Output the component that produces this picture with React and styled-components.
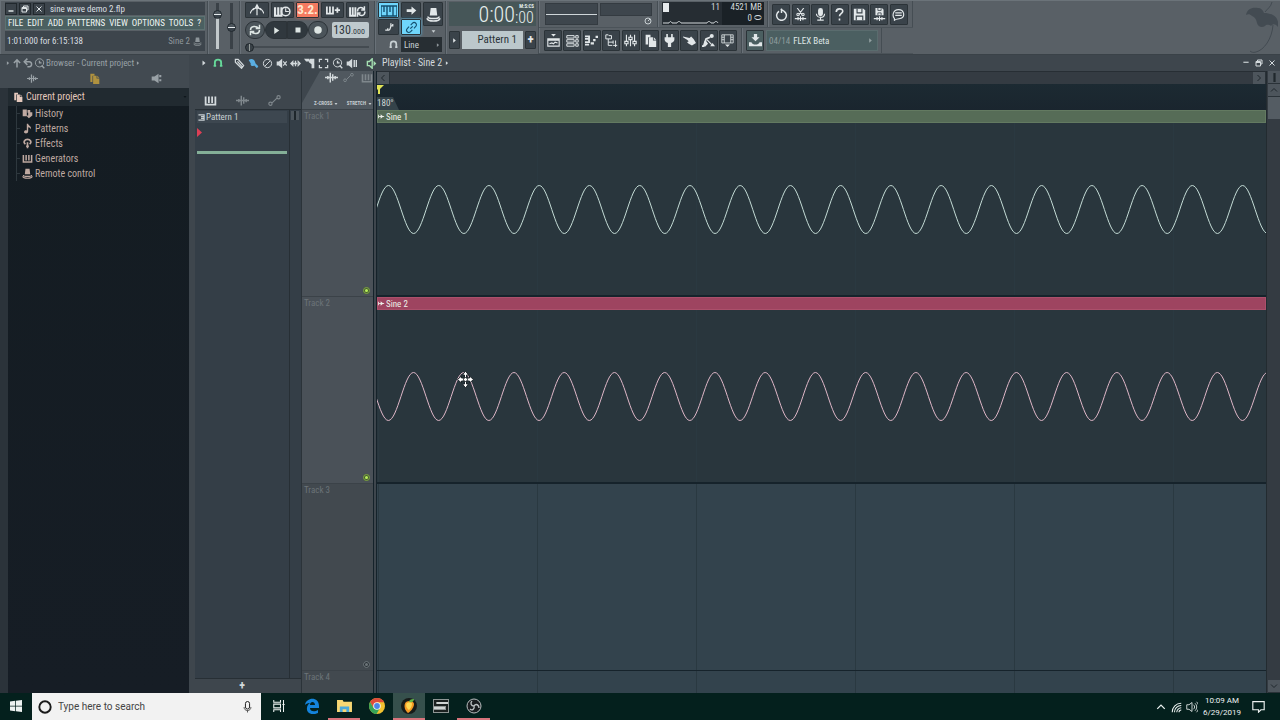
import React from "react";
import styled, { createGlobalStyle } from "styled-components";

const condensed = `"Roboto Condensed", "Liberation Sans Narrow", "DejaVu Sans Condensed", sans-serif`;

const GlobalStyle = createGlobalStyle`
  * {
    box-sizing: border-box;
  }

  body {
    margin: 0;
    overflow: hidden;
    background: #33434d;
    font-family: ${condensed};
  }

  button,
  input,
  select {
    margin: 0;
    padding: 0;
    border: 0;
    color: inherit;
    font: inherit;
    background: none;
    appearance: none;
  }

  h1,
  h2,
  p,
  ul {
    margin: 0;
    padding: 0;
    font-size: inherit;
    font-weight: inherit;
    list-style: none;
  }
`;

/* ---------- icons ---------- */

const Svg = styled.svg`
  display: block;
  flex: none;
  fill: none;
  stroke: currentColor;
  stroke-width: 1.4;
`;

const solid = { fill: "currentColor", stroke: "none" };

const shapes = {
  metronome: <path d="M0 12c2-4 4-6 5-6M16 12c-2-4-4-6-5-6M3 8c3-3 7-3 10 0M8 2v12M6 6l2-4 2 4z" />,
  keysClock: (
    <>
      <path d="M1 4v8h6V4M4 4v7" strokeWidth="2" />
      <circle cx="11" cy="8" r="4" />
      <path d="M11 5v3h3" strokeWidth="1" />
    </>
  ),
  keysPlus: <path d="M1 4v8h7V4M4.500 4v7M10 8h6M13 5v6" strokeWidth="2" />,
  keysLoop: (
    <>
      <path d="M1 4v8h5V4M3.500 4v7" strokeWidth="1.800" />
      <path d="M8 8c0-4 4-5 6-2M15 8c0 4-4 5-6 2M11.500 6.500h3V3M11 9.500H8V13" />
    </>
  ),
  loop: <path d="M2 8c0-6 8-6 11-2M14 8c0 6-8 6-11 2M14 1v5H9M2 15v-5h5" strokeWidth="2" />,
  play: <path d="M4 2l9 6-9 6z" {...solid} />,
  stop: <path d="M3 3h10v10H3z" {...solid} />,
  record: <circle cx="8" cy="8" r="6" {...solid} />,
  piano: <path d="M0 3h16v10H0zM3 3v6M6 3v10M9 3v6M12 3v10" />,
  arrow: <path d="M1 6h7V2l7 6-7 6v-4H1z" {...solid} />,
  slide: <path d="M3 13h5c2 0 2-4 3-6M2 13h4v-3M11 2v4h3V3" strokeWidth="2" />,
  link: <path d="M6.500 9.500l3-3M7 5l2-2c3-3 7 1 4 4l-2 2M9 11l-2 2c-3 3-7-1-4-4l2-2" />,
  knob: (
    <>
      <path d="M5 1h6l1 8H4z" {...solid} />
      <path d="M2 10c0 3 12 3 12 0M1 12c1 4 13 4 14 0" strokeWidth="1.600" />
    </>
  ),
  magnet: <path d="M3 14V7c0-6 10-6 10 0v7M1 12.500h4M11 12.500h4" strokeWidth="3" />,
  power: <path d="M5 4a6 6 0 1 0 6 0M8 6V1M7 1l4 3" strokeWidth="1.800" />,
  scissors: (
    <>
      <path d="M4 0l6 8M12 0L6 8M1 13h14M5 11v4M8 10v6M11 11v4" />
      <circle cx="5" cy="8" r="1.500" />
      <circle cx="11" cy="8" r="1.500" />
    </>
  ),
  mic: (
    <>
      <rect x="5" y="0" width="6" height="10" rx="3" {...solid} />
      <path d="M3 7c0 6 10 6 10 0M8 11v4M4 15h8" />
    </>
  ),
  help: <path d="M4 5c0-5 8-5 8-1 0 3-4 3-4 6M8 13v2.500" strokeWidth="2" />,
  save: (
    <>
      <path d="M1 1h12l2 2v12H1z" {...solid} />
      <path d="M5 1v5h6V1M4 15v-5h8v5" stroke="#3a444b" />
    </>
  ),
  saveWave: (
    <>
      <path d="M3 0h8l2 2v7H3z" {...solid} />
      <path d="M6 0v3h4V0M6 9V6h4v3" stroke="#3a444b" strokeWidth="1" />
      <path d="M1 13h14M5 11v4M8 10v6M11 11v4" />
    </>
  ),
  comment: <path d="M3 13c-3-3-2-11 5-11s9 9 2 11c-3 1-4 0-7 2zM4 6h8M4 9h8" />,
  playlist: (
    <>
      <path d="M1 6h14v9H1zM1 7.500h14M3 12l3-1 2 1 2-2 3 1" />
      <path d="M5 0h6L8 3z" {...solid} />
    </>
  ),
  rack: <path d="M1 2h9v3H1zM1 7h9v3H1zM1 12h9v3H1zM12 2h3v3h-3zM12 7h3v3h-3zM12 12h3v3h-3z" strokeWidth="1.200" />,
  roll: (
    <>
      <path d="M0 3h5v3H0M0 10h5V7M0 13h5" strokeWidth="2.200" />
      <path d="M7 10h4v3H7zM10 6h3v3h-3zM13 2h3v3h-3z" {...solid} />
    </>
  ),
  tree: <path d="M1 1h3l1 1h3v4H1zM4 6v8h5M4 10h6M10 8v4M13 8v4M10 14h5M13 12v4" strokeWidth="1.200" />,
  mixer: (
    <>
      <path d="M3 1v14M8 1v14M13 1v14" />
      <path d="M1 9h4v3H1zM6 4h4v3H6zM11 9h4v3h-4z" fill="#3a444b" />
    </>
  ),
  page: (
    <>
      <path d="M2 1h6v3H5v9H2z" {...solid} />
      <path d="M6 4h5v4h4v8H6zM12 4l3 3h-3z" {...solid} />
    </>
  ),
  plug: <path d="M4 0h2v4h4V0h2v4h2v3c0 2-2 3-4 4v5H6v-5C4 10 2 9 2 7V4h2z" {...solid} />,
  hand: <path d="M0 3l8 2 2-2 3 3 3 5-5 3-4-2-2-2 2-1-2-2-5-3z" {...solid} />,
  digger: (
    <>
      <circle cx="12" cy="2.500" r="2.500" {...solid} />
      <path d="M10 4L5 6 4 9l2 3-3 3M4 9l-2 6H0" strokeWidth="2.200" />
      <path d="M6 7l6 6" />
      <path d="M10 15l3-4 3 4z" {...solid} />
    </>
  ),
  film: (
    <>
      <path d="M1 1h14v10H1zM4 1v10M12 1v10M1 4h3M1 7h3M12 4h3M12 7h3" strokeWidth="1" />
      <path d="M5 13h6l-3 3z" {...solid} />
    </>
  ),
  download: <path d="M6 0h4v4h3L8 9 3 4h3zM0 10h3c1 4 9 4 10 0h3v5H0z" {...solid} />,
  up: <path d="M8 15V3M3 8l5-5 5 5" strokeWidth="2.400" />,
  undo: <path d="M4 6h6c5 0 5 8 0 8H7M7 1L2 6l5 5" strokeWidth="2.400" />,
  search: (
    <>
      <circle cx="8" cy="7" r="6" />
      <path d="M11 11l4 4M8 4v3h3" strokeWidth="2" />
    </>
  ),
  wave: <path d="M0 8h16M3.500 6v4M6.500 2v12M9.500 4v8M12.500 6v4" strokeWidth="1.800" />,
  speaker: <path d="M1 5h4l6-4v14l-6-4H1zM12 3h3v3h-3zM12 9h3v3h-3z" {...solid} />,
  history: <path d="M1 2h6v10H1zM8 3h4v3h3v5l-5 4-4-4h3V7H8z" {...solid} />,
  note: <path d="M7 1h2c0 3 5 3 4 8-1-2-2-3-4-3v6c0 4-6 4-6 1 0-2 2-3 4-2z" {...solid} />,
  effect: <path d="M5 9C1 6 4 2 8 2s7 4 3 7M8 6v9M6 12h4" strokeWidth="2.400" />,
  keys: <path d="M2 3v10h12V3M6 3v8M10 3v8" strokeWidth="2.200" />,
  automation: (
    <>
      <circle cx="3" cy="12" r="2" />
      <circle cx="13" cy="4" r="2" />
      <path d="M5 11l6-6" />
    </>
  ),
  pencil: <path d="M2 2h4l8 9-3 4-9-9zM5 5l7 8" strokeWidth="1.800" />,
  brush: <path d="M1 3c4-3 8-1 9 2l1 3 4 4-2 3-4-4c-3 2-6 0-5-3z" {...solid} />,
  ban: (
    <>
      <circle cx="8" cy="8" r="6" />
      <path d="M4 12l8-8" />
    </>
  ),
  mute: (
    <>
      <path d="M1 5h3l5-4v14l-5-4H1z" {...solid} />
      <path d="M10.500 5l5 6M15.500 5l-5 6" strokeWidth="1.600" />
    </>
  ),
  slip: <path d="M0 8l5-5v10zM16 8l-5-5v10zM4 7h8v2H4zM7 4h2v8H7z" {...solid} />,
  slice: <path d="M0 1h8v4L3 5zM9 1h6v14h-4V9L7 6z" {...solid} />,
  select: <path d="M2 6V2h4M10 2h4v4M14 10v4h-4M6 14H2v-4" strokeWidth="1.800" />,
  playback: <path d="M1 5h3l5-4v14l-5-4H1zM11 3h2v10h-2zM14 3h2v10h-2z" {...solid} />,
  scrub: (
    <>
      <path d="M2 5h3l4-4v14l-4-4H2z" strokeWidth="2" />
      <path d="M11 4l4 4-4 4z" {...solid} />
    </>
  ),
  chevron: <path d="M5 3l6 5-6 5z" {...solid} />,
  down: <path d="M2 4h12l-6 8z" {...solid} />,
  left: <path d="M11 2L5 8l6 6" strokeWidth="2" />,
  right: <path d="M5 2l6 6-6 6" strokeWidth="2" />,
  top: <path d="M2 11l6-6 6 6" strokeWidth="2" />,
  bottom: <path d="M2 5l6 6 6-6" strokeWidth="2" />,
  split: <path d="M6 0h4v16H6z" {...solid} />,
  minus: <path d="M3 12h10" strokeWidth="3" />,
  minusHigh: <path d="M1 6h14" strokeWidth="3" />,
  windows: <path d="M5 5V2h9v8h-3M2 5h9v9H2zM2 7h9" strokeWidth="2" />,
  close: <path d="M3 3l10 10M13 3L3 13" strokeWidth="2" />,
  clip: (
    <>
      <path d="M1 4v8M2 8h12" strokeWidth="2" />
      <path d="M6 3v10l6-5z" {...solid} />
    </>
  ),
  pattern: <path d="M1 2h13v12H1M7 6h7M7 10h7" strokeWidth="2.600" />,
  dial: (
    <>
      <circle cx="8" cy="8" r="6" strokeWidth="2" />
      <path d="M8 8l4-4" strokeWidth="2" />
    </>
  ),
};

const Icon = ({ name, size = 12 }) => (
  <Svg width={size} height={size} viewBox="0 0 16 16" aria-hidden="true">
    {shapes[name]}
  </Svg>
);

/* ---------- toolbar ---------- */

const Window = styled.div`
  display: flex;
  flex-direction: column;
  height: 100vh;
  overflow: hidden;
  color: #c8d0d3;
  font-size: 9px;
  line-height: 12px;
`;

const Toolbar = styled.header`
  display: flex;
  flex: none;
  height: 54px;
  background: #596066;
  border-top: 1px solid #6b7379;
`;

const Panel = styled.section`
  display: flex;
  flex: none;
  flex-direction: ${({ $column }) => ($column ? "column" : "row")};
  gap: ${({ $gap = 0 }) => $gap}px;
  width: ${({ $width }) => ($width ? `${$width}px` : "auto")};
  padding: ${({ $pad = "2px 5px" }) => $pad};
  border-right: 1px solid #454d53;
  border-left: 1px solid #697178;
`;

const Line = styled.div`
  display: flex;
  align-items: ${({ $align = "center" }) => $align};
  justify-content: ${({ $justify = "flex-start" }) => $justify};
  gap: ${({ $gap = 0 }) => $gap}px;
  width: ${({ $width }) => ($width ? `${$width}px` : "auto")};
`;

const Stack = styled.div`
  display: flex;
  flex-direction: column;
  align-items: ${({ $align = "stretch" }) => $align};
  gap: ${({ $gap = 0 }) => $gap}px;
`;

const ToolRow = styled.div`
  display: flex;
  height: 27px;
  border-bottom: 1px solid #4b5359;
`;

const InfoTitle = styled.div`
  display: flex;
  align-items: center;
  height: 13px;
  gap: 2px;
  background: #3d454c;
`;

const InfoName = styled.h1`
  padding-left: 3px;
  color: #d9dfe1;
`;

const TinyButton = styled.button`
  display: grid;
  place-items: center;
  width: 12px;
  height: 12px;
  border: 1px solid #21282d;
  background: #3b434a;
  color: #dfe4e6;
`;

const Menu = styled.nav`
  display: flex;
  align-items: center;
  justify-content: space-between;
  height: 14px;
  padding: 0 3px 0 2px;
  background: #4b6061;
  border: 1px solid #5d7272;
`;

const MenuItem = styled.button`
  font-size: 9px;
  color: #f0f6f4;
`;

const Hint = styled.div`
  display: flex;
  align-items: center;
  justify-content: space-between;
  height: 20px;
  padding: 0 3px 0 2px;
  background: #3d454c;
  color: #d9dfe1;
`;

const HintTarget = styled.span`
  display: flex;
  align-items: center;
  gap: 3px;
  color: #8d959a;
`;

const Fader = styled.input`
  width: 10px;
  height: 46px;
  writing-mode: vertical-lr;
  direction: rtl;
  background: linear-gradient(${({ $track }) => $track}) center / 3px 100% no-repeat;

  &::-webkit-slider-thumb {
    width: 9px;
    height: 9px;
    border: 1px solid #222a30;
    border-radius: 50%;
    background: linear-gradient(#4e575e 40%, #e5eaec 40%, #e5eaec 60%, #39424a 60%);
    appearance: none;
  }
`;

const PositionBar = styled.input`
  width: 100%;
  height: 10px;
  background: linear-gradient(#444b51, #444b51) center / 100% 2px no-repeat;

  &::-webkit-slider-thumb {
    width: 9px;
    height: 9px;
    border: 1px solid #1d2429;
    border-radius: 50%;
    background: linear-gradient(90deg, #3a4248 40%, #969d9b 40%, #969d9b 60%, #3a4248 60%);
    appearance: none;
  }
`;

const tones = {
  dark: "background: #3a434a; color: #e2e7e9;",
  blue: "background: #6fd6fb; color: #14506f; box-shadow: 0 0 3px #59bfee;",
  red: "background: #f57a60; color: #ffe9d0; box-shadow: 0 0 3px #d86752;",
  green: "background: #4b5f61; color: #e2e7e9;",
};

const ToolButton = styled.button`
  display: grid;
  flex: none;
  place-items: center;
  width: ${({ $w = 18 }) => $w}px;
  height: ${({ $h = 21 }) => $h}px;
  border: 1px solid #2b3338;
  border-radius: 1px;
  font-size: 13px;
  font-weight: 700;
  ${({ $tone = "dark" }) => tones[$tone]}
`;

const RoundButton = styled.button`
  display: grid;
  place-items: center;
  width: ${({ $w = 20 }) => $w}px;
  height: 18px;
  border: 1px solid #2c3338;
  border-radius: ${({ $radius = "9px" }) => $radius};
  background: ${({ $fill = "#30383e" }) => $fill};
  color: #dde5e3;
`;

const Tempo = styled.output`
  display: flex;
  align-items: baseline;
  justify-content: center;
  width: 37px;
  height: 16px;
  margin-left: 4px;
  padding-right: 3px;
  border-radius: 2px;
  background: #bfc9cd;
  color: #2f383e;
  font-size: 12px;
  line-height: 16px;

  small {
    font-size: 8px;
  }
`;

const SnapBox = styled.label`
  display: flex;
  align-items: center;
  width: 41px;
  height: 15px;
  padding: 0 1px 0 3px;
  background: #272e33;
  color: #8d959a;
`;

const SnapSelect = styled.select`
  flex: 1;
  min-width: 0;
  color: #c8d0d3;
`;

const Clock = styled.output`
  display: flex;
  justify-content: flex-end;
  height: 24px;
  padding: 0 2px;
  background: #465658;
  color: #e7efee;
  font-size: 22px;
  font-weight: 300;
  line-height: 26px;
`;

const ClockCents = styled.span`
  display: flex;
  flex-direction: column;
  width: 19px;
  padding-top: 1px;
  font-size: 16px;
  line-height: 17px;

  small {
    align-self: flex-end;
    font-size: 5px;
    font-weight: 700;
    line-height: 6px;
  }
`;

const PatternButton = styled.button`
  width: 61px;
  height: 18px;
  padding-right: 6px;
  background: #bcc8cc;
  color: #2b3439;
  font-size: 11px;
  text-align: right;
`;

const Scope = styled.div`
  display: flex;
  align-items: center;
  width: ${({ $w }) => $w}px;
  height: ${({ $h }) => $h}px;
  background: #3e464d;
  border: 1px solid #343b41;

  &::before {
    content: "";
    flex: 1;
    height: 1px;
    background: ${({ $line }) => ($line ? "#cfd6d9" : "none")};
  }
`;

const Meter = styled.div`
  display: grid;
  grid-template-columns: 60px 1fr;
  width: 102px;
  height: 23px;
  background: #1a2126;
  color: #d4dadd;
  line-height: 11px;
`;

const MeterLoad = styled.div`
  display: flex;
  flex-wrap: wrap;
  justify-content: space-between;
  padding: 0 2px 0 1px;
  background: #262d33;

  &::before {
    content: "";
    width: 6px;
    height: 9px;
    margin-top: 1px;
    background: #e6eaec;
  }
`;

const MeterText = styled.div`
  padding-right: 2px;
  text-align: right;
`;

const News = styled.button`
  display: flex;
  align-items: center;
  width: 112px;
  height: 21px;
  padding: 0 3px 0 2px;
  gap: 3px;
  background: #4b5f61;
  border: 1px solid #5a6c6e;
  color: #dfe6e6;

  time {
    color: #8d9c9d;
  }

  svg {
    margin-left: auto;
    color: #93a1a2;
  }
`;

const Brand = styled.div`
  margin-left: auto;
  color: #434b52;
`;

const TransportPanel = () => (
  <Panel $column $gap={3} $width={135} $pad="1px 5px 0 4px">
    <Line $justify="space-between">
      <ToolButton $w={24} $h={16} aria-label="Metronome"><Icon name="metronome" size={14} /></ToolButton>
      <ToolButton $w={23} $h={16} aria-label="Wait for input"><Icon name="keysClock" size={17} /></ToolButton>
      <ToolButton $w={23} $h={16} $tone="red">3.2.</ToolButton>
      <ToolButton $w={23} $h={16} aria-label="Blend recording"><Icon name="keysPlus" size={14} /></ToolButton>
      <ToolButton $w={23} $h={16} aria-label="Loop recording"><Icon name="keysLoop" size={17} /></ToolButton>
    </Line>
    <Line>
      <RoundButton $fill="#4b545a" aria-label="Loop"><Icon name="loop" /></RoundButton>
      <RoundButton $w={22} $radius="9px 0 0 9px" aria-label="Play"><Icon name="play" size={9} /></RoundButton>
      <RoundButton $w={21} $radius="0 9px 9px 0" aria-label="Stop"><Icon name="stop" size={8} /></RoundButton>
      <RoundButton $fill="#4b545a" aria-label="Record"><Icon name="record" size={10} /></RoundButton>
      <Tempo>130<small>.000</small></Tempo>
    </Line>
    <PositionBar type="range" defaultValue={0} aria-label="Song position" />
  </Panel>
);

const ModePanel = () => (
  <Panel $column $gap={2} $width={71} $pad="1px 3px 0 2px">
    <Line $gap={2} $align="flex-start">
      <Stack $gap={1}>
        <Line $gap={2}>
          <ToolButton $w={21} $h={16} $tone="blue" aria-label="Typing keyboard"><Icon name="piano" size={16} /></ToolButton>
          <ToolButton $w={20} $h={16} aria-label="Step edit"><Icon name="arrow" size={11} /></ToolButton>
        </Line>
        <Line $gap={2}>
          <ToolButton $w={21} $h={16} aria-label="Slide"><Icon name="slide" size={10} /></ToolButton>
          <ToolButton $w={20} $h={16} $tone="blue" aria-label="Multilink"><Icon name="link" size={13} /></ToolButton>
        </Line>
      </Stack>
      <Stack $gap={3} $align="center">
        <ToolButton $w={20} $h={24} aria-label="Controller"><Icon name="knob" size={15} /></ToolButton>
        <Icon name="down" size={5} />
      </Stack>
    </Line>
    <Line $justify="flex-end" $gap={3}>
      <Icon name="magnet" size={9} />
      <SnapBox>
        <SnapSelect aria-label="Snap" defaultValue="Line">
          <option>Line</option>
        </SnapSelect>
        <Icon name="chevron" size={6} />
      </SnapBox>
    </Line>
  </Panel>
);

const topTools = [
  ["power", "Undo"],
  ["scissors", "Cut"],
  ["mic", "Record audio"],
  ["help", "Help"],
  ["save", "Save"],
  ["saveWave", "Export"],
  ["comment", "Comments"],
];

const windowTools = [
  ["playlist", "Playlist"],
  ["rack", "Channel rack"],
  ["roll", "Piano roll"],
  ["tree", "Browser"],
  ["mixer", "Mixer"],
  ["page", "Projects"],
  ["plug", "Plugins"],
  ["hand", "Touch"],
  ["digger", "Tools"],
  ["film", "Arrangement"],
];

const TopBar = () => (
  <Toolbar>
    <Panel $column $gap={1} $width={208} $pad="1px 2px 0 4px">
      <InfoTitle>
        <TinyButton aria-label="Minimize"><Icon name="minus" size={8} /></TinyButton>
        <TinyButton aria-label="Restore"><Icon name="windows" size={8} /></TinyButton>
        <TinyButton aria-label="Close"><Icon name="close" size={8} /></TinyButton>
        <InfoName>sine wave demo 2.flp</InfoName>
      </InfoTitle>
      <Menu>
        {["FILE", "EDIT", "ADD", "PATTERNS", "VIEW", "OPTIONS", "TOOLS", "?"].map((item) => (
          <MenuItem key={item}>{item}</MenuItem>
        ))}
      </Menu>
      <Hint>
        <span>1:01:000 for 6:15:138</span>
        <HintTarget>Sine 2 <Icon name="knob" size={9} /></HintTarget>
      </Hint>
    </Panel>
    <Panel $gap={4} $width={32} $pad="2px 3px">
      <Fader type="range" defaultValue={81} $track="#3a4147 20%, #c3c9cb 20%" aria-label="Main volume" />
      <Fader type="range" defaultValue={47} $track="#3a4147, #3a4147" aria-label="Main pitch" />
    </Panel>
    <TransportPanel />
    <ModePanel />
    <Panel $column $gap={5} $width={93} $pad="1px 2px">
      <Clock>
        0:00
        <ClockCents>
          <small>M:S:CS</small>
          :00
        </ClockCents>
      </Clock>
      <Line $gap={2}>
        <ToolButton $w={11} $h={18} aria-label="Previous pattern"><Icon name="chevron" size={7} /></ToolButton>
        <PatternButton>Pattern 1</PatternButton>
        <ToolButton $w={11} $h={18} aria-label="Add pattern">+</ToolButton>
      </Line>
    </Panel>
    <Stack>
      <ToolRow>
        <Panel $gap={2} $width={119}>
          <Scope $w={58} $h={22} $line />
          <Stack $gap={1} $align="flex-end">
            <Scope $w={52} $h={15} />
            <Icon name="dial" size={8} />
          </Stack>
        </Panel>
        <Panel $width={110} $pad="1px 3px">
          <Meter>
            <MeterLoad>
              11
              <Svg width="56" height="10" viewBox="0 0 56 10" aria-hidden="true">
                <path d="M0 9h6c1-2 2-2 3 0h5c1-2 3-2 4 0h26c1-2 3-2 4 0h3c1-2 3-2 4 0" strokeWidth="1" />
              </Svg>
            </MeterLoad>
            <MeterText>4521 MB<br />0 ⬭</MeterText>
          </Meter>
        </Panel>
        <Panel $pad="1px 4px 1px 3px">
          <Line $width={136} $justify="space-between">
            {topTools.map(([name, label]) => (
              <ToolButton key={name} aria-label={label}><Icon name={name} size={13} /></ToolButton>
            ))}
          </Line>
        </Panel>
      </ToolRow>
      <ToolRow>
        <Panel $pad="2px 4px">
          <Line $width={193} $justify="space-between">
            {windowTools.map(([name, label]) => (
              <ToolButton key={name} aria-label={label}><Icon name={name} size={13} /></ToolButton>
            ))}
          </Line>
        </Panel>
        <Panel $gap={2} $pad="2px 3px">
          <ToolButton $tone="green" aria-label="Download"><Icon name="download" size={13} /></ToolButton>
          <News><time>04/14</time>FLEX Beta<Icon name="chevron" size={7} /></News>
        </Panel>
      </ToolRow>
    </Stack>
    <Brand>
      <Svg width="34" height="53" viewBox="0 0 34 53" aria-hidden="true">
        <path d="M0 14C1 8 6 6 12 7c3 0 5 2 6 5 7 0 13 3 14 9v5c-2-3-5-4-7-1-3-2-5-1-6 0-3 2-7 1-8-3-1-4-2-6-5-7-2-2-4-2-6-1z" {...solid} />
        <path d="M19 11c2-3 6-5 7-10M27 24c-1 14-9 25-17 27-3 1-5 0-6-1" strokeWidth="1" />
      </Svg>
    </Brand>
  </Toolbar>
);

/* ---------- browser ---------- */

const Main = styled.main`
  display: flex;
  flex: 1;
  min-height: 0;
  border-top: 1px solid #3a4248;
`;

const BrowserPane = styled.aside`
  display: flex;
  flex: none;
  flex-direction: column;
  width: 195px;
  background: #2b333a;
  border-right: 6px solid #3e464d;
`;

const BrowserHead = styled.div`
  height: 33px;
  padding: 2px 5px;
  background: #424a51;
  color: #99a1a6;
`;

const BrowserTabs = styled.div`
  display: grid;
  grid-template-columns: repeat(3, 62px);
  place-items: center;
  height: 18px;
  margin-left: -4px;
`;

const Tab = styled.button`
  color: ${({ $active }) => $active || "#99a1a6"};
`;

const Tree = styled.div`
  flex: 1;
  margin-left: 8px;
  background: linear-gradient(#141c22, #161d25);
  color: #bfa9a1;
  font-size: 10px;
`;

const TreeRoot = styled.h2`
  display: flex;
  align-items: center;
  height: 18px;
  padding: 0 2px 0 5px;
  gap: 3px;
  background: #212a30;
  color: #e5c9bd;

  svg:last-child {
    margin-left: auto;
    color: #0f161b;
  }
`;

const TreeList = styled.ul`
  margin-left: 8px;
`;

const TreeItem = styled.li`
  display: flex;
  align-items: center;
  height: 15px;
  gap: 2px;
  border-left: 1px solid #2e383e;

  &::before {
    content: "";
    width: 3px;
    height: 1px;
    background: #2e383e;
  }
`;

const treeItems = [
  ["history", "History"],
  ["note", "Patterns"],
  ["effect", "Effects"],
  ["keys", "Generators"],
  ["knob", "Remote control"],
];

const Browser = () => (
  <BrowserPane>
    <BrowserHead>
      <Line $gap={1}>
        <Icon name="chevron" size={6} />
        <Icon name="up" size={10} />
        <Icon name="undo" size={10} />
        <Icon name="search" size={11} />
        Browser - Current project
        <Icon name="chevron" size={6} />
      </Line>
      <BrowserTabs>
        <Tab aria-label="Sounds"><Icon name="wave" size={11} /></Tab>
        <Tab $active="#b0923f" aria-label="Project"><Icon name="page" size={11} /></Tab>
        <Tab aria-label="Plugins"><Icon name="speaker" size={11} /></Tab>
      </BrowserTabs>
    </BrowserHead>
    <Tree>
      <TreeRoot><Icon name="page" size={10} />Current project<Icon name="down" size={4} /></TreeRoot>
      <TreeList>
        {treeItems.map(([icon, label]) => (
          <TreeItem key={label}><Icon name={icon} size={11} />{label}</TreeItem>
        ))}
      </TreeList>
    </Tree>
  </BrowserPane>
);

/* ---------- playlist ---------- */

const PlaylistPane = styled.section`
  display: flex;
  flex: 1;
  flex-direction: column;
  min-width: 0;
  background: #3e464d;
`;

const PlaylistTitle = styled.div`
  display: flex;
  flex: none;
  align-items: center;
  height: 16px;
  padding: 0 3px 0 5px;
  gap: 2px;
  color: #d3d9dc;
`;

const PlaylistTools = styled.div`
  display: flex;
  padding: 0 3px 0 7px;
  gap: 3px;
`;

const TitleText = styled.h2`
  display: flex;
  flex: 1;
  align-items: center;
  gap: 2px;
  font-size: 10px;
`;

const Tool = styled.button`
  display: grid;
  place-items: center;
  width: ${({ $w = 11 }) => $w}px;
  color: ${({ $color = "#d3d9dc" }) => $color};
`;

const PlaylistBody = styled.div`
  display: flex;
  flex: 1;
  min-height: 0;
`;

const Picker = styled.div`
  display: flex;
  flex: none;
  flex-direction: column;
  width: 107px;
  border-right: 1px solid #2b3339;
`;

const PickerTabs = styled.div`
  display: flex;
  flex: none;
  align-items: flex-end;
  height: 38px;
  padding: 0 9px 2px;
  gap: 21px;
`;

const PickerList = styled.div`
  display: flex;
  flex: 1;
  background: #343e47;
  border-top: 1px solid #272f35;
  border-bottom: 1px solid #272f35;
`;

const PatternCard = styled.div`
  flex: 1;
  padding: 1px 2px;
  border-right: 1px solid #272f35;
`;

const PatternName = styled.p`
  display: flex;
  align-items: center;
  height: 12px;
  padding-left: 1px;
  gap: 1px;
  background: #3d4750;
`;

const PatternBody = styled.div`
  height: 31px;
  padding-top: 5px;
  border-bottom: 3px solid #84af97;
  color: #dd3f55;
`;

const PickerScroll = styled.div`
  width: 11px;
  padding: 1px;

  &::before {
    content: "";
    display: block;
    width: 8px;
    height: 9px;
    background: linear-gradient(90deg, #4c555c 3px, #1e262b 3px, #1e262b 5px, #4c555c 5px);
  }
`;

const AddPattern = styled.button`
  height: 14px;
  padding-right: 12px;
  color: #d3d9dc;
  font-size: 12px;
  font-weight: 700;
`;

const TrackColumn = styled.div`
  flex: none;
  width: 71px;
  overflow: hidden;
`;

const TrackTools = styled.div`
  display: flex;
  flex-direction: column;
  justify-content: space-between;
  height: 38px;
  padding: 0 1px 2px 12px;
  background: #50585f;
  clip-path: polygon(0 100%, 0 84%, 18px 0, 100% 0, 100% 100%);
  color: #c5ccd0;
  font-size: 5px;
  font-weight: 700;
  line-height: 7px;
`;

const TrackOption = styled.button`
  display: flex;
  align-items: center;
  gap: 2px;
`;

const TrackHead = styled.div`
  display: flex;
  flex-direction: column;
  justify-content: space-between;
  height: 187px;
  padding: 0 3px 1px 2px;
  background: ${({ $muted }) => ($muted ? "#42494f" : "#4a5158")};
  border-top: 1px solid #3b4248;
  color: #6c7479;
`;

const TrackSwitch = styled.input`
  align-self: flex-end;
  width: 7px;
  height: 7px;
  margin-bottom: 1px;
  border: 2px solid #2a3237;
  border-radius: 50%;
  outline: 1px solid #737b80;
  outline-offset: -1px;
  background: #6d757a;

  &:checked {
    border-color: #47612f;
    background: #b9f05a;
    outline-color: #7fa04c;
  }
`;

const Arrangement = styled.div`
  display: flex;
  flex: 1;
  flex-direction: column;
  min-width: 0;
  border-left: 4px double #15222a;
  overflow: hidden;
`;

const HScroll = styled.div`
  display: flex;
  flex: none;
  justify-content: space-between;
  height: 13px;
  background: #343b42;
  border-top: 1px solid #272e34;
`;

const ScrollButton = styled.button`
  display: grid;
  flex: none;
  place-items: center;
  width: 13px;
  height: 13px;
  background: #4d555c;
  color: #20282d;
  border-right: 1px solid #2a3238;
  border-bottom: 1px solid #2a3238;
`;

const Ruler = styled.div`
  flex: none;
  height: 26px;
  padding-top: 1px;
  background: linear-gradient(#1c2a32, #1a252e);
  color: #d0d8d6;
`;

const Marker = styled.svg`
  display: block;
  width: 8px;
  height: 9px;
  margin-bottom: 3px;
  fill: #e0e356;
`;

const MarkerLabel = styled.span`
  display: block;
  width: 22px;
  height: 13px;
  background: #35434a;
  clip-path: polygon(0 0, 16px 0, 100% 100%, 0 100%);
`;

const Lane = styled.div`
  display: flex;
  flex: none;
  flex-direction: column;
  height: 187px;
  background:
    repeating-linear-gradient(90deg, #2a3941 0 1px, transparent 1px 159px) 1px 0,
    ${({ $filled }) => ($filled ? "#29363d" : "#33434d")};
  border-bottom: ${({ $filled }) => ($filled ? 2 : 1)}px solid #16232b;
`;

const ClipHead = styled.div`
  display: flex;
  flex: none;
  align-items: center;
  height: 13px;
  gap: 1px;
  background: ${({ $color }) => $color};
  border: 1px solid ${({ $edge }) => $edge};
  color: #edf0ea;
`;

const WaveArea = styled.svg`
  display: block;
  flex: 1;
  width: 100%;
  min-height: 0;
  fill: none;
  stroke-width: 1;
`;

const VScroll = styled.div`
  display: flex;
  flex: none;
  flex-direction: column;
  justify-content: space-between;
  width: 14px;
  padding-left: 1px;
  background: #343b42;
  border-left: 1px solid #232b30;
`;

const VThumb = styled.div`
  height: 22px;
  background: #545c63;
`;

const MoveCursor = styled.svg`
  position: absolute;
  top: 371px;
  left: 457px;
  fill: #fff;
  stroke: #1c2429;
  stroke-width: 1;
`;

const period = 50.24;

// one cubic per half wave keeps the curve close to a true sine
const sinePath = (peakX, centre, height) => {
  const half = period / 2;
  const ease = half * 0.3642;
  let x = peakX - period;
  let y = centre - height;
  let d = `M${x} ${y}`;
  for (let i = 0; i < 110; i += 1) {
    const nextY = i % 2 ? centre - height : centre + height;
    d += `C${x + ease} ${y} ${x + half - ease} ${nextY} ${x + half} ${nextY}`;
    x += half;
    y = nextY;
  }
  return d;
};

const tracks = [
  { name: "Track 1", clip: "Sine 1", color: "#566c57", edge: "#637a61", wave: "#c4dcd6", peak: 11.5, on: true },
  { name: "Track 2", clip: "Sine 2", color: "#9e4460", edge: "#ab506b", wave: "#dfb7c8", peak: 36.5, on: true },
  { name: "Track 3", on: false },
  { name: "Track 4", on: false },
];

const playlistTools = [
  ["pencil"],
  ["brush", "#5aaee2"],
  ["ban"],
  ["mute"],
  ["slip"],
  ["slice"],
  ["select"],
  ["search"],
  ["playback"],
];

const Playlist = () => (
  <PlaylistPane>
    <PlaylistTitle>
      <Icon name="chevron" size={8} />
      <Tool $w={15} $color="#66d99a" aria-label="Snap"><Icon name="magnet" size={10} /></Tool>
      <PlaylistTools>
        {playlistTools.map(([name, color]) => (
          <Tool key={name} $color={color} aria-label={name}><Icon name={name} size={11} /></Tool>
        ))}
      </PlaylistTools>
      <Tool $w={18} $color="#a4dfb1" aria-label="Scrub"><Icon name="scrub" size={11} /></Tool>
      <TitleText>Playlist - Sine 2 <Icon name="chevron" size={6} /></TitleText>
      <Tool aria-label="Minimize playlist"><Icon name="minusHigh" size={6} /></Tool>
      <Tool aria-label="Restore playlist"><Icon name="windows" size={8} /></Tool>
      <Tool aria-label="Close playlist"><Icon name="close" size={8} /></Tool>
    </PlaylistTitle>
    <PlaylistBody>
      <Picker>
        <PickerTabs>
          <Tool aria-label="Patterns"><Icon name="keys" size={13} /></Tool>
          <Tool $color="#7f878c" aria-label="Audio clips"><Icon name="wave" size={13} /></Tool>
          <Tool $color="#7f878c" aria-label="Automation clips"><Icon name="automation" size={13} /></Tool>
        </PickerTabs>
        <PickerList>
          <PatternCard>
            <PatternName><Icon name="pattern" size={7} />Pattern 1</PatternName>
            <PatternBody>
              <Svg width="5" height="9" viewBox="0 0 5 9" aria-hidden="true"><path d="M0 0l5 4.500L0 9z" {...solid} /></Svg>
            </PatternBody>
          </PatternCard>
          <PickerScroll />
        </PickerList>
        <AddPattern aria-label="Add pattern clip">+</AddPattern>
      </Picker>
      <TrackColumn>
        <TrackTools>
          <Line $gap={7} $justify="flex-end">
            <Tool aria-label="Audio"><Icon name="wave" size={13} /></Tool>
            <Tool $color="#7f878c" aria-label="Automation"><Icon name="automation" size={11} /></Tool>
            <Tool $color="#7f878c" aria-label="Notes"><Icon name="keys" size={12} /></Tool>
          </Line>
          <Line $justify="space-between">
            <TrackOption>Z-CROSS<Icon name="down" size={4} /></TrackOption>
            <TrackOption>STRETCH<Icon name="down" size={4} /></TrackOption>
          </Line>
        </TrackTools>
        {tracks.map((track) => (
          <TrackHead key={track.name} $muted={!track.on}>
            {track.name}
            <TrackSwitch type="checkbox" defaultChecked={track.on} aria-label={`${track.name} on`} />
          </TrackHead>
        ))}
      </TrackColumn>
      <Arrangement>
        <HScroll>
          <ScrollButton aria-label="Scroll left"><Icon name="left" size={8} /></ScrollButton>
          <ScrollButton aria-label="Scroll right"><Icon name="right" size={8} /></ScrollButton>
        </HScroll>
        <Ruler>
          <Marker viewBox="0 0 8 9"><path d="M0 0h7L3 4v5H1V5L0 4z" /></Marker>
          <MarkerLabel>180°</MarkerLabel>
        </Ruler>
        {tracks.map((track) => (
          <Lane key={track.name} $filled={Boolean(track.clip)}>
            {track.clip && (
              <>
                <ClipHead $color={track.color} $edge={track.edge}><Icon name="clip" size={7} />{track.clip}</ClipHead>
                <WaveArea stroke={track.wave}><path d={sinePath(track.peak, 86.5, 24)} /></WaveArea>
              </>
            )}
          </Lane>
        ))}
      </Arrangement>
      <VScroll>
        <div>
          <ScrollButton aria-label="Split view"><Icon name="split" size={9} /></ScrollButton>
          <ScrollButton aria-label="Scroll up"><Icon name="top" size={8} /></ScrollButton>
          <VThumb />
        </div>
        <ScrollButton aria-label="Scroll down"><Icon name="bottom" size={8} /></ScrollButton>
      </VScroll>
    </PlaylistBody>
  </PlaylistPane>
);

/* ---------- taskbar ---------- */

const Taskbar = styled.footer`
  display: flex;
  flex: none;
  height: 27px;
  background: #04201d;
  color: #edf2f1;
  font-family: Roboto, "Open Sans", sans-serif;
`;

const TaskButton = styled.button`
  display: grid;
  place-items: center;
  width: ${({ $w = 32 }) => $w}px;
  padding-top: 1px;
  background: ${({ $active }) => ($active ? "#36504c" : "none")};
  border-bottom: 2px solid ${({ $open }) => ($open ? "#d8747c" : "transparent")};
`;

const SearchBox = styled.label`
  display: flex;
  align-items: center;
  width: 229px;
  padding: 0 8px 0 6px;
  gap: 6px;
  background: #f2f2f2;
  color: #1b1b1b;
`;

const SearchInput = styled.input`
  flex: 1;
  min-width: 0;
  font-size: 10px;

  &::placeholder {
    color: #444;
    opacity: 1;
  }
`;

const Tray = styled.div`
  display: flex;
  align-items: center;
  margin-left: auto;
  padding-right: 9px;
  gap: 4px;
`;

const DateTime = styled.time`
  width: 40px;
  font-size: 8px;
  text-align: center;
`;

const NoticeButton = styled.button`
  display: grid;
  place-items: center;
  width: 25px;
  height: 27px;
`;

const TaskbarView = () => (
  <Taskbar>
    <TaskButton aria-label="Start">
      <Svg width="12" height="12" viewBox="0 0 16 16">
        <path d="M0 2l7-1v6.500H0zM8 1l8-1v7.500H8zM0 8.500h7V15l-7-1zM8 8.500h8V16l-8-1z" {...solid} />
      </Svg>
    </TaskButton>
    <SearchBox>
      <Svg width="14" height="14" viewBox="0 0 16 16"><circle cx="8" cy="8" r="6.500" strokeWidth="2.200" /></Svg>
      <SearchInput type="text" placeholder="Type here to search" aria-label="Type here to search" />
      <Svg width="11" height="12" viewBox="0 0 16 16">
        <rect x="5" y="0" width="6" height="11" rx="3" />
        <path d="M3 8c0 7 10 7 10 0M8 13v3" strokeWidth="1" />
      </Svg>
    </SearchBox>
    <TaskButton $w={35} aria-label="Task view">
      <Svg width="12" height="12" viewBox="0 0 16 16">
        <path d="M1 0v3h9V0M1 16v-3h9v3M1 5.500h9v5H1zM14 0v16M12.500 6h3" />
      </Svg>
    </TaskButton>
    <TaskButton aria-label="Edge">
      <Svg width="16" height="16" viewBox="0 0 16 16">
        <path d="M1 7C2-1 15-2 15 8v2H6c0 4 5 4 8 2v3C8 18 2 15 3 10c0-2 1-4 3-5-3 0-4 1-5 2zm5 0h5c0-4-5-4-5 0z" fill="#1483dc" stroke="none" />
      </Svg>
    </TaskButton>
    <TaskButton $open aria-label="File Explorer">
      <Svg width="15" height="14" viewBox="0 0 16 15">
        <path d="M0 1h6l1 2h9v11H0z" fill="#f7d774" stroke="none" />
        <path d="M3 14V8h10v6h-3v-3H6v3z" fill="#4ba9dc" stroke="none" />
      </Svg>
    </TaskButton>
    <TaskButton $w={33} aria-label="Chrome">
      <Svg width="16" height="16" viewBox="0 0 16 16">
        <g stroke="none">
          <circle cx="8" cy="8" r="8" fill="#f2c230" />
          <path d="M1.100 4A8 8 0 0 1 15 4.200H8L4.600 10z" fill="#de4b3b" />
          <path d="M1.100 4a8 8 0 0 0 6.400 12L11 10H4.600z" fill="#36a457" />
          <circle cx="8" cy="8" r="3.800" fill="#f5f5f5" />
          <circle cx="8" cy="8" r="2.900" fill="#4a85e8" />
        </g>
      </Svg>
    </TaskButton>
    <TaskButton $active $open aria-label="FL Studio">
      <Svg width="16" height="16" viewBox="0 0 16 16">
        <g stroke="none">
          <circle cx="8" cy="8" r="8" fill="#171b19" />
          <path d="M5 4c3-2 8-1 8 2 0 4-4 8-6 9-3-2-5-8-2-11z" fill="#f59a24" />
          <path d="M6 5c2-1 5-1 5 1 0 3-2 5-3 6-2-1-4-5-2-7z" fill="#ffd953" />
          <path d="M8 4c0-2 2-3 5-3 0 2-2 4-5 3z" fill="#65b947" />
        </g>
      </Svg>
    </TaskButton>
    <TaskButton aria-label="Sound tool">
      <Svg width="16" height="16" viewBox="0 0 16 16">
        <path d="M0 1h16v14H0z" fill="#8f9695" stroke="none" />
        <path d="M15 3H2v4h12v6H1" stroke="#1b2120" strokeWidth="2" />
        <path d="M4 5h11M1 10h11" stroke="#e6eae9" strokeWidth="1.400" />
      </Svg>
    </TaskButton>
    <TaskButton $w={33} $open aria-label="OBS Studio">
      <Svg width="16" height="16" viewBox="0 0 16 16">
        <circle cx="8" cy="8" r="7" fill="#1b1d20" stroke="#b9bdbf" strokeWidth="1" />
        <path d="M8 8c-3 0-4-3-2-5M8 8c2-3 5-1 5 2M8 8c1 3-2 5-4 3" stroke="#b9bdbf" />
      </Svg>
    </TaskButton>
    <Tray>
      <Icon name="top" size={10} />
      <Svg width="12" height="12" viewBox="0 0 16 16">
        <path d="M3 15C3 8 8 3 15 3M6 15c0-5 4-9 9-9M9 15c0-3 3-6 6-6M12 15c0-2 1-3 3-3" />
      </Svg>
      <Svg width="12" height="12" viewBox="0 0 16 16">
        <path d="M1 5h3l4-3v12l-4-3H1zM10 5c2 2 2 4 0 6M12 3c3 3 3 7 0 10M14 1c4 4 4 10 0 14" strokeWidth="1.100" />
      </Svg>
      <DateTime>10:09 AM<br />6/29/2019</DateTime>
      <NoticeButton aria-label="Notifications">
        <Svg width="13" height="13" viewBox="0 0 16 16"><path d="M1 2h14v10h-4l-3 3v-3H1z" /></Svg>
      </NoticeButton>
    </Tray>
  </Taskbar>
);

const App = () => (
  <Window>
    <GlobalStyle />
    <TopBar />
    <Main>
      <Browser />
      <Playlist />
    </Main>
    <TaskbarView />
    <MoveCursor width="17" height="17" viewBox="0 0 17 17" aria-hidden="true">
      <path d="M8.500 0l3 4h-2v3h3V5l4 3.500-4 3.500v-2h-3v3h2l-3 4-3-4h2v-3h-3v2l-4-3.500L4.500 5v2h3V4h-2z" />
      <circle cx="8.500" cy="8.500" r="2" />
    </MoveCursor>
  </Window>
);

export default App;
